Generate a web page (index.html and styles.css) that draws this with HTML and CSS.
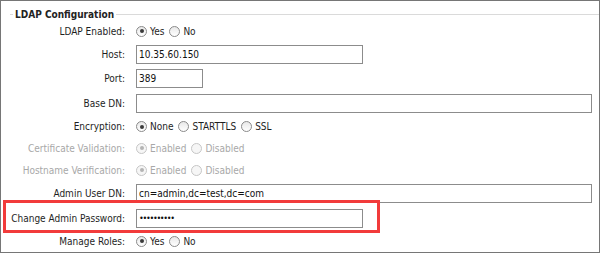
FILE: index.html
```html
<!DOCTYPE html>
<html>
<head>
<meta charset="utf-8">
<link rel="stylesheet" href="styles.css">
</head>
<body>
<div class="panel">
  <fieldset class="group">
    <legend class="group-title">LDAP Configuration</legend>
    <div class="form">
      <div class="row">
        <span class="label">LDAP Enabled:</span>
        <span class="options">
          <span class="opt"><span class="radio checked"></span>Yes</span>
          <span class="opt"><span class="radio"></span>No</span>
        </span>
      </div>
      <div class="row">
        <span class="label">Host:</span>
        <input class="field medium" type="text" value="10.35.60.150">
      </div>
      <div class="row">
        <span class="label">Port:</span>
        <input class="field short" type="text" value="389">
      </div>
      <div class="row">
        <span class="label">Base DN:</span>
        <input class="field long" type="text" value="">
      </div>
      <div class="row">
        <span class="label">Encryption:</span>
        <span class="options">
          <span class="opt"><span class="radio checked"></span>None</span>
          <span class="opt"><span class="radio"></span>STARTTLS</span>
          <span class="opt"><span class="radio"></span>SSL</span>
        </span>
      </div>
      <div class="row disabled">
        <span class="label">Certificate Validation:</span>
        <span class="options">
          <span class="opt"><span class="radio checked"></span>Enabled</span>
          <span class="opt"><span class="radio"></span>Disabled</span>
        </span>
      </div>
      <div class="row disabled">
        <span class="label">Hostname Verification:</span>
        <span class="options">
          <span class="opt"><span class="radio checked"></span>Enabled</span>
          <span class="opt"><span class="radio"></span>Disabled</span>
        </span>
      </div>
      <div class="row">
        <span class="label">Admin User DN:</span>
        <input class="field long" type="text" value="cn=admin,dc=test,dc=com">
      </div>
      <div class="row">
        <span class="label">Change Admin Password:</span>
        <input class="field medium secret" type="text" value="••••••••••">
      </div>
      <div class="row">
        <span class="label">Manage Roles:</span>
        <span class="options">
          <span class="opt"><span class="radio checked"></span>Yes</span>
          <span class="opt"><span class="radio"></span>No</span>
        </span>
      </div>
    </div>
  </fieldset>
  <div class="highlight"></div>
</div>
</body>
</html>
```

FILE: styles.css
```css
html, body {
  margin: 0;
  padding: 0;
  background: #ffffff;
}

body {
  font-family: "DejaVu Sans", "Liberation Sans", sans-serif;
  font-stretch: condensed;
  font-size: 10px;
  color: #1e1e1e;
}

.panel {
  position: relative;
  box-sizing: border-box;
  width: 600px;
  height: 253px;
  border: 1px solid #767676;
  padding-top: 7px;
  overflow: hidden;
}

.group {
  margin: 0 0 0 9px;
  padding: 0;
  border: 0;
  border-top: 1px solid #dadada;
  min-width: 0;
}

.group-title {
  margin-left: 3px;
  padding: 0 2px;
  font-weight: bold;
  font-size: 10px;
  line-height: 13px;
  color: #222;
}

.form {
  display: flex;
  flex-direction: column;
  gap: 5.7px;
  padding-top: 2px;
}

.row {
  display: flex;
  align-items: center;
  gap: 11px;
  min-height: 16px;
}

.label {
  width: 115px;
  flex: none;
  text-align: right;
  white-space: nowrap;
}

.options {
  display: flex;
  align-items: center;
  gap: 5px;
}

.opt {
  display: flex;
  align-items: center;
  gap: 3px;
  white-space: nowrap;
}

.radio {
  box-sizing: border-box;
  width: 11px;
  height: 11px;
  border: 1px solid #8a8a8a;
  border-radius: 50%;
  background: linear-gradient(#e8e8e8, #ffffff);
  display: flex;
  align-items: center;
  justify-content: center;
}

.radio.checked::after {
  content: "";
  width: 4px;
  height: 4px;
  border-radius: 50%;
  background: #3a3a3a;
}

.disabled {
  color: #a8a8a8;
}

.disabled .radio {
  border-color: #c6c6c6;
  background: #f6f6f6;
}

.disabled .radio.checked::after {
  background: #b4b4b4;
}

.field {
  box-sizing: border-box;
  height: 19px;
  margin: 0;
  padding: 0 2px;
  border: 1px solid #8c8c8c;
  border-radius: 0;
  background: #fff;
  font: inherit;
  color: #111;
  outline: none;
}

.field.medium {
  width: 227px;
}

.field.short {
  width: 67px;
}

.field.long {
  width: 456px;
}

.field.secret {
  letter-spacing: -1.3px;
  font-size: 9px;
}

.highlight {
  position: absolute;
  left: 2px;
  top: 199px;
  width: 377px;
  height: 33px;
  box-sizing: border-box;
  border: 3px solid #f23b3b;
}
```
